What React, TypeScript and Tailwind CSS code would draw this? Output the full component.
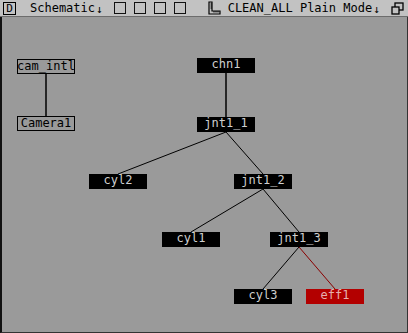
import React from 'react';

interface SchemNode {
    id: string;
    x: number;
    y: number;
    kind: 'plain' | 'dark' | 'red';
}

const TOP = 17;

const nodes: SchemNode[] = [
    { id: 'cam_intl', x: 17, y: 59, kind: 'plain' },
    { id: 'Camera1', x: 17, y: 116, kind: 'plain' },
    { id: 'chn1', x: 197, y: 58, kind: 'dark' },
    { id: 'jnt1_1', x: 197, y: 117, kind: 'dark' },
    { id: 'cyl2', x: 89, y: 174, kind: 'dark' },
    { id: 'jnt1_2', x: 234, y: 174, kind: 'dark' },
    { id: 'cyl1', x: 162, y: 232, kind: 'dark' },
    { id: 'jnt1_3', x: 270, y: 232, kind: 'dark' },
    { id: 'cyl3', x: 234, y: 289, kind: 'dark' },
    { id: 'eff1', x: 306, y: 289, kind: 'red' },
];

// parent bottom-center -> child top-center
const links: [string, string, boolean?][] = [
    ['cam_intl', 'Camera1'],
    ['chn1', 'jnt1_1'],
    ['jnt1_1', 'cyl2'],
    ['jnt1_1', 'jnt1_2'],
    ['jnt1_2', 'cyl1'],
    ['jnt1_2', 'jnt1_3'],
    ['jnt1_3', 'cyl3'],
    ['jnt1_3', 'eff1', true],
];

const W = 58;
const H = 15;

function byId(id: string) {
    return nodes.find((n) => n.id === id)!;
}

function RulerIcon() {
    return (
        <svg width="13" height="14" viewBox="0 0 13 14" className="block">
            <path d="M1 1 H4 V10 H12 V13 H1 Z" fill="none" stroke="#000" strokeWidth="1.2" />
            <path d="M4 3 H2.5 M4 5 H2.5 M4 7 H2.5 M6 10 V11.5 M8 10 V11.5 M10 10 V11.5" stroke="#000" strokeWidth="1" />
        </svg>
    );
}

function RestoreIcon() {
    return (
        <svg width="13" height="13" viewBox="0 0 13 13" className="block">
            <rect x="4" y="1" width="8" height="7" fill="none" stroke="#000" strokeWidth="1.3" />
            <rect x="1" y="5" width="7" height="7" fill="#c2c2c2" stroke="#000" strokeWidth="1.3" />
        </svg>
    );
}

export default function App() {
    return (
        <div
            className="w-[408px] h-[333px] flex flex-col bg-[#9a9a9a] overflow-hidden text-[12px] leading-none"
            style={{ fontFamily: '"DejaVu Sans Mono", "Liberation Mono", monospace' }}
        >
            <div className="h-[17px] shrink-0 flex items-center bg-[#c2c2c2] border-b border-[#6c6c6c] text-black">
                <div className="ml-[3px] w-[13px] h-[13px] border border-black flex items-center justify-center text-[11px]">D</div>
                <div className="ml-[14px] flex items-end">
                    <span>Schematic</span>
                    <span className="text-[11px] ml-px translate-y-[1px]">↓</span>
                </div>
                <div className="ml-[11px] flex gap-[8px]">
                    <div className="w-[12px] h-[12px] border-[1.5px] border-[#111]" />
                    <div className="w-[12px] h-[12px] border-[1.5px] border-[#111]" />
                    <div className="w-[12px] h-[12px] border-[1.5px] border-[#111]" />
                    <div className="w-[12px] h-[12px] border-[1.5px] border-[#111]" />
                </div>
                <div className="ml-[22px]">
                    <RulerIcon />
                </div>
                <div className="ml-[7px] flex items-end">
                    <span>CLEAN_ALL Plain Mode</span>
                    <span className="text-[11px] ml-px translate-y-[1px]">↓</span>
                </div>
                <div className="ml-auto mr-[4px]">
                    <RestoreIcon />
                </div>
            </div>

            <div className="relative flex-1 border-l-2 border-l-[#111] border-r border-r-[#333] border-b border-b-[#333]">
                <svg className="absolute -left-[2px] top-0" width="408" height="316">
                    {links.map(([a, b, red]) => {
                        const p = byId(a);
                        const c = byId(b);
                        return (
                            <line
                                key={a + b}
                                x1={p.x + W / 2}
                                y1={p.y + H - TOP}
                                x2={c.x + W / 2}
                                y2={c.y - TOP}
                                stroke={red ? '#8a0000' : '#000'}
                                strokeWidth={a === 'cam_intl' || a === 'chn1' ? 1.5 : 1}
                            />
                        );
                    })}
                </svg>
                {nodes.map((n) => (
                    <div
                        key={n.id}
                        className={
                            n.kind === 'plain'
                                ? 'absolute w-[58px] h-[15px] border border-black bg-[#9a9a9a] text-black flex items-start justify-center overflow-hidden whitespace-nowrap leading-[13px]'
                                : n.kind === 'red'
                                ? 'absolute w-[58px] h-[15px] bg-[#b30000] text-[#e6b0b0] flex items-start justify-center leading-[13px]'
                                : 'absolute w-[58px] h-[15px] bg-black text-[#cfcfcf] flex items-start justify-center leading-[13px]'
                        }
                        style={{ left: n.x - 2, top: n.y - TOP }}
                    >
                        {n.id}
                    </div>
                ))}
            </div>
        </div>
    );
}
